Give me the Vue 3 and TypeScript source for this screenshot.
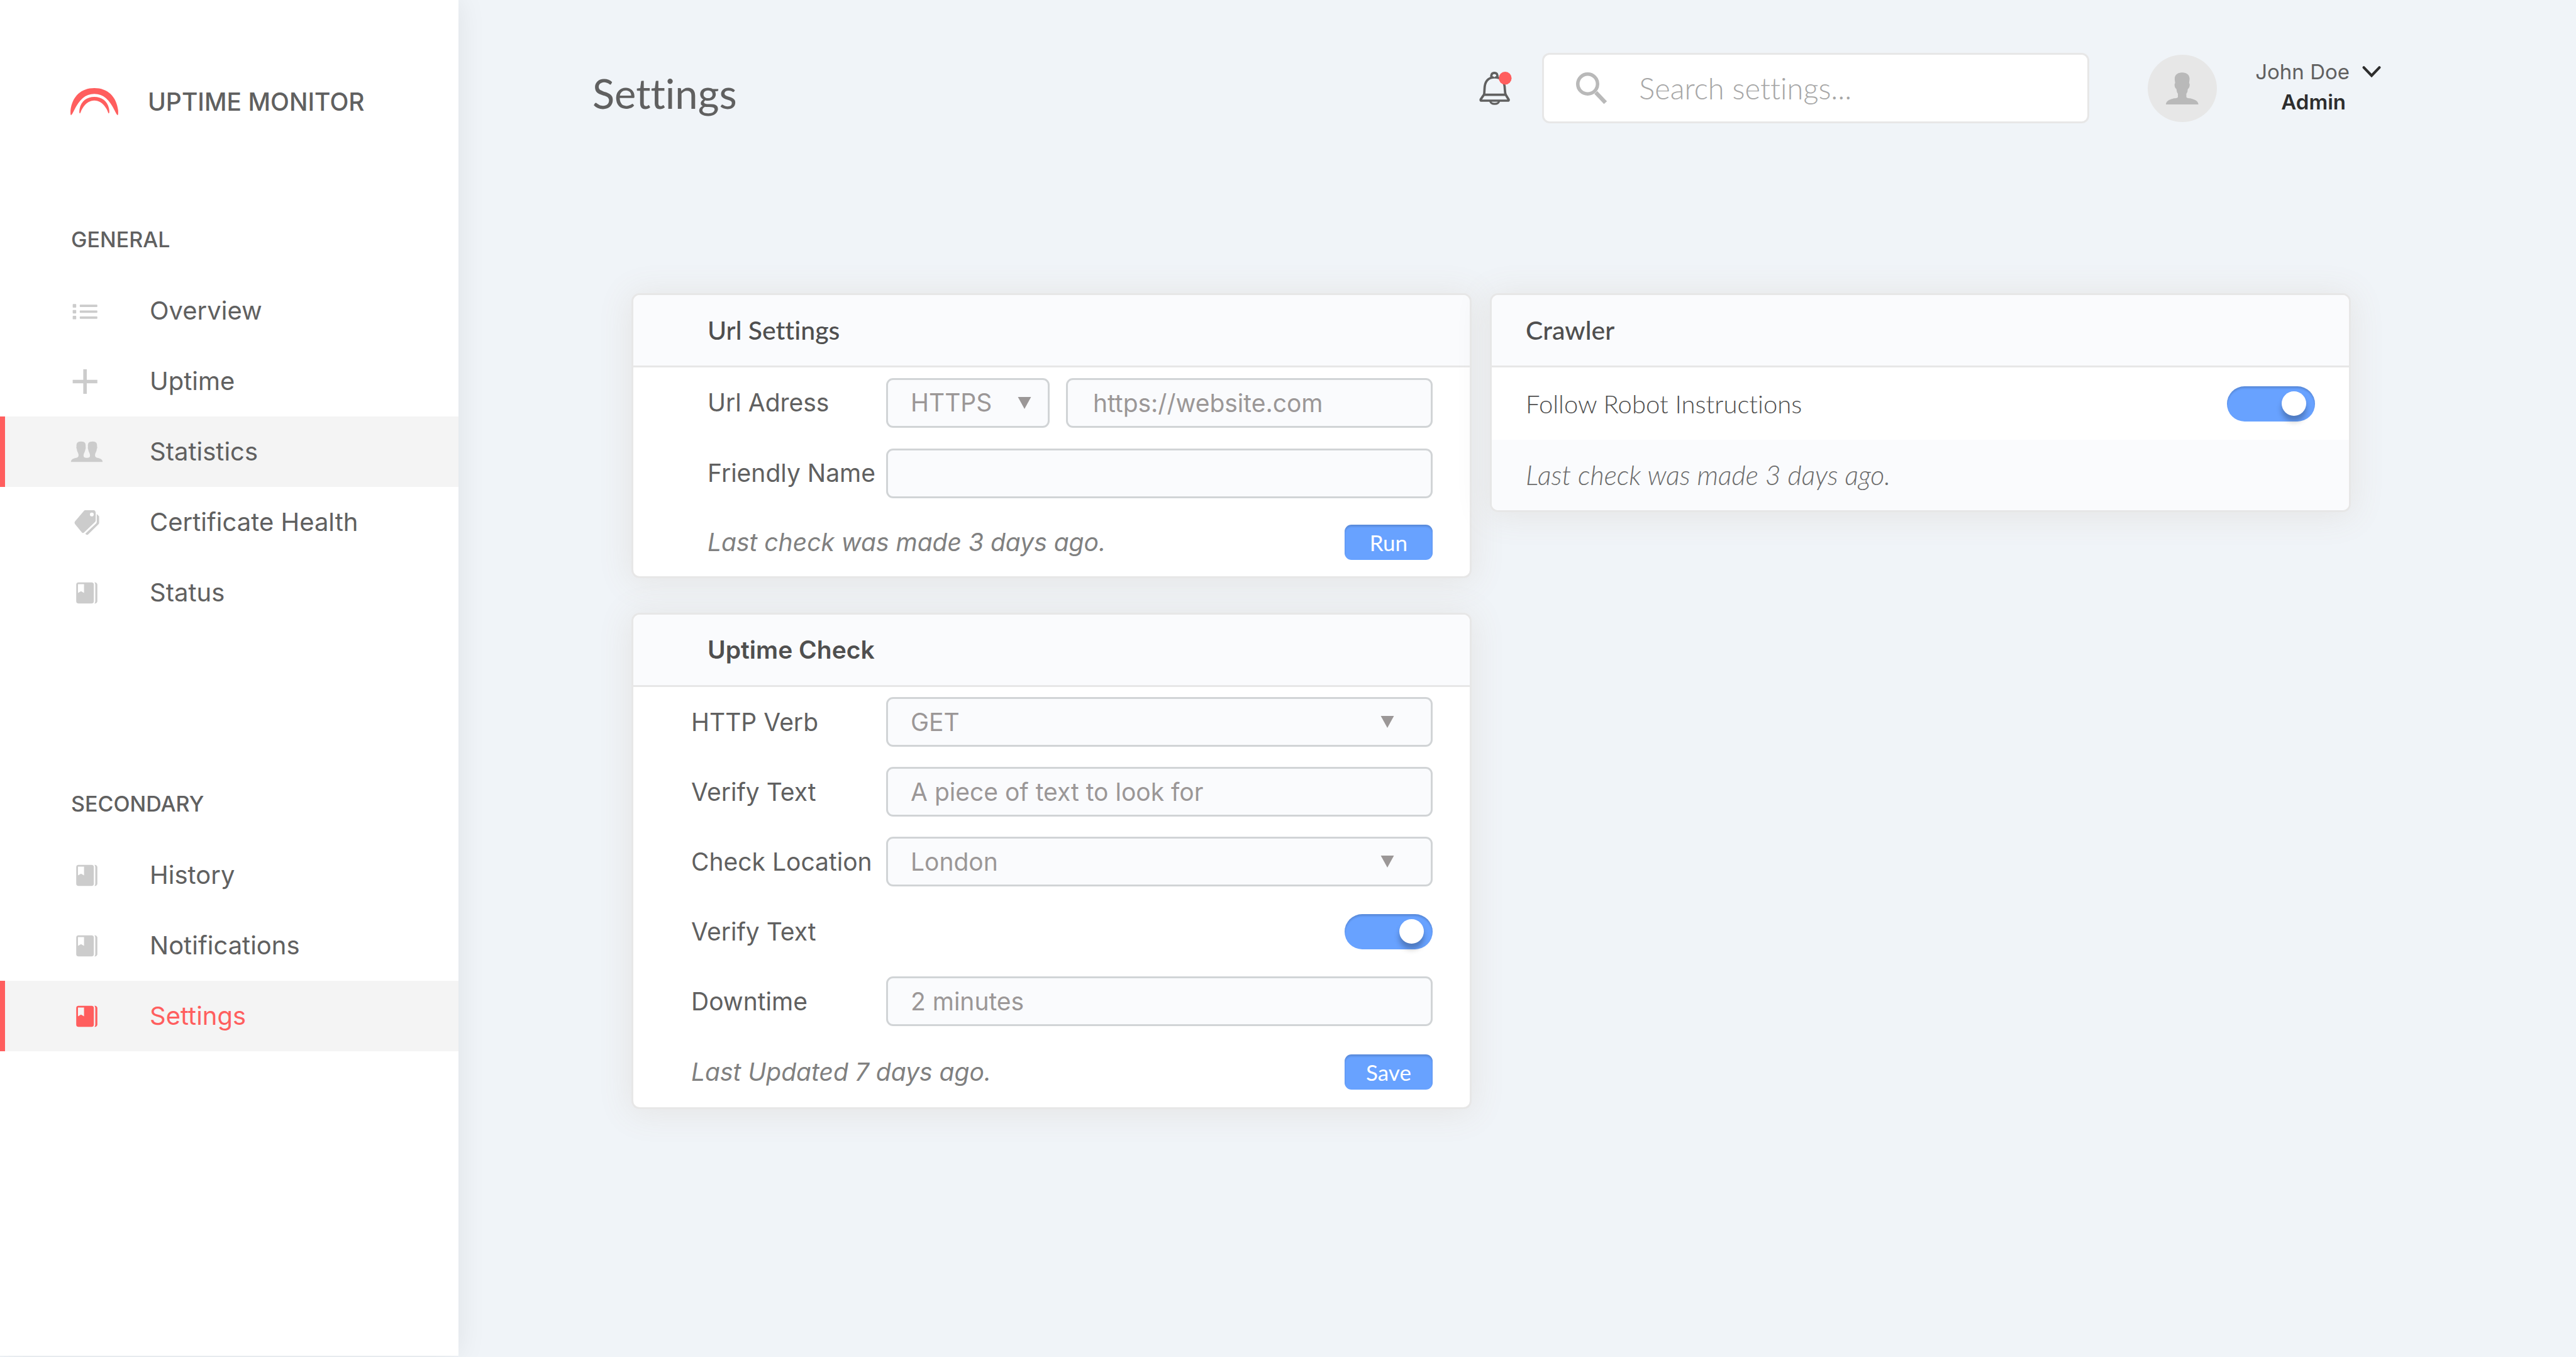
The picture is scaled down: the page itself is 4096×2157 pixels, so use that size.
<script setup lang="ts">
import { ref } from 'vue'

type IconName = 'list' | 'plus' | 'people' | 'tags' | 'book'

interface NavItem {
  label: string
  icon: IconName
  marked?: boolean
  current?: boolean
}

interface NavGroup {
  title: string
  items: NavItem[]
}

const groups: NavGroup[] = [
  {
    title: 'GENERAL',
    items: [
      { label: 'Overview', icon: 'list' },
      { label: 'Uptime', icon: 'plus' },
      { label: 'Statistics', icon: 'people', marked: true },
      { label: 'Certificate Health', icon: 'tags' },
      { label: 'Status', icon: 'book' },
    ],
  },
  {
    title: 'SECONDARY',
    items: [
      { label: 'History', icon: 'book' },
      { label: 'Notifications', icon: 'book' },
      { label: 'Settings', icon: 'book', marked: true, current: true },
    ],
  },
]

const icons: Record<IconName, string> = {
  list: 'M7 12h4a1 1 0 0 1 1 1v4a1 1 0 0 1-1 1h-4a1 1 0 0 1-1-1v-4a1 1 0 0 1 1-1zM7 22h4a1 1 0 0 1 1 1v4a1 1 0 0 1-1 1h-4a1 1 0 0 1-1-1v-4a1 1 0 0 1 1-1zM7 32h4a1 1 0 0 1 1 1v4a1 1 0 0 1-1 1h-4a1 1 0 0 1-1-1v-4a1 1 0 0 1 1-1zM19 13h28q1 0 1 1v2q0 1-1 1h-28q-1 0-1-1v-2q0-1 1-1zM19 23h28q1 0 1 1v2q0 1-1 1h-28q-1 0-1-1v-2q0-1 1-1zM19 33h28q1 0 1 1v2q0 1-1 1h-28q-1 0-1-1v-2q0-1 1-1z',
  plus: 'M24 3h6v18h18v6h-18v18h-6v-18h-18v-6h18z',
  people:
    'M3 41C3 36 8 35 12 34C15 33 16 32 16 29C16 26 13 23 13 19C12 17 12 16 12.5 15C12 9 14 6 20 6C27 6 28.5 9 28 15C28.5 17 28 19 27.500 20C27 24 24.500 26 24.500 30C24.500 33 26 34 30 34C34 34 35.500 33 35.500 30C35.500 26 33 24 32.500 20C32 19 31.500 17 32 15C31.500 9 33 6 40 6C46 6 48 9 47.500 15C48 16 48 17 47 19C47 23 44 26 44 29C44 32 45 33 48 34C52 35 57 36 57 41z',
  tags: 'M27 3H42.500Q45.200 4 45.200 8V20.500Q45.200 22 44 23.300L25.500 41Q23.500 43 21.500 41L9.700 26.500Q8.500 24.500 9.700 22.500L25 4.500Q26 3 27 3zM38.600 7a3.300 3.300 0 1 0 0 6.600a3.300 3.300 0 1 0 0-6.600zM47 9.500L50.500 13Q51 13.500 51 14.500V24.500Q51 26 50 27L32 44.500Q30.500 45.500 29 44.500L27.500 43L46 25.500Q47 24.500 47 23z',
  book: 'M16 6H38Q42 6 42 10V38Q42 42 38 42H16Q12 42 12 38V10Q12 6 16 6zM15 9V24L20.200 21L25.300 24V9zM43 6H44.500Q48 7 48 10V38Q48 41 44.500 42H43Q44.500 41 44.500 38V10Q44.500 7 43 6z',
}

const search = ref('')
const protocol = ref('HTTPS')
const siteUrl = ref('')
const friendlyName = ref('')
const verb = ref('GET')
const verifyText = ref('')
const location = ref('London')
const verifyEnabled = ref(true)
const downtime = ref('')
const followRobots = ref(true)
</script>

<template>
  <div class="page">
    <aside class="sidebar">
      <div class="brand">
        <svg class="brand-mark" viewBox="0 0 81 46" aria-hidden="true">
          <path d="M1 46C-.5 46 0 40 0 38C3 14 18 0 40.500 0S78 14 81 38C81 40 81.500 46 80 46C79 46 77 42 75 38C66 20 56 10 40.500 10S15 20 6 38C4 42 2 46 1 46z" />
          <path d="M16 43C14.500 43 15 38 15.500 35C18 22 28 15 40.500 15S63 22 65.500 35C66 38 66.500 43 65 43C64 43 63 38 61 35C55 25 48 21 40.500 21S26 25 20 35C18 38 17 43 16 43z" />
        </svg>
        <span class="brand-name">UPTIME MONITOR</span>
      </div>
      <nav class="nav">
        <section v-for="group in groups" :key="group.title" class="nav-group">
          <h2 class="nav-title">{{ group.title }}</h2>
          <ul class="nav-list">
            <li v-for="item in group.items" :key="item.label">
              <a href="#" class="nav-link" :class="{ marked: item.marked, current: item.current }">
                <svg class="nav-icon" viewBox="0 0 60 48" aria-hidden="true">
                  <path :d="icons[item.icon]" fill-rule="evenodd" />
                </svg>
                <span>{{ item.label }}</span>
              </a>
            </li>
          </ul>
        </section>
      </nav>
    </aside>

    <main class="main">
      <header class="topbar">
        <h1 class="title">Settings</h1>
        <button class="bell" type="button" aria-label="Notifications">
          <svg viewBox="0 0 56 57" aria-hidden="true">
            <g fill="none" stroke="#606060" stroke-width="4">
              <path d="M21 10C20 5 22 2 26 2S32 5 31 10" />
              <path d="M8.500 39C9 34 9 30 9.500 25C11 14 18 9.500 26.500 9.500S42 14 43.500 25C44 30 44 34 45 39" />
              <path d="M8 39.500H45.500L50.500 47.500Q51 49.500 49 49.500H4Q2 49.500 2.500 47.500z" />
              <path d="M19 50C19 53 22 55 26.500 55S34 53 34 50" stroke-width="3.500" />
            </g>
            <circle cx="26" cy="7" r="2" fill="#f0f4f8" />
            <circle cx="44.500" cy="11" r="11" fill="#ff5e5e" />
          </svg>
        </button>
        <label class="search">
          <svg viewBox="0 0 54 54" aria-hidden="true">
            <g fill="none" stroke="#b9b9b9">
              <circle cx="20" cy="20" r="17" stroke-width="6" />
              <path d="M34 34.500L50.500 52" stroke-width="7" />
            </g>
          </svg>
          <input v-model="search" type="search" placeholder="Search settings..." aria-label="Search settings" />
        </label>
        <div class="account">
          <svg class="avatar" viewBox="0 0 118 114" preserveAspectRatio="none" aria-hidden="true">
            <ellipse cx="59" cy="57" rx="59" ry="57" fill="#e7e7e7" />
            <path
              d="M31 84.300C31 79 37 75.500 42.500 74.500C46 73.500 51.500 74 51.500 71.500V66C50 64 49.500 63 49.300 60C49 58 48.500 57.500 48.200 57.300C46 56 45.500 51 46 49.300C46.300 48.500 46.800 48.500 46.800 48.300C46.600 45 46 43 46 40.500C46 34 51 30 58.700 30S71.400 34 71.400 40.500C71.400 43 70.800 45 70.600 48.300C70.600 48.500 71.100 48.500 71.400 49.300C71.900 51 71.400 56 69.200 57.300C68.900 57.500 68.400 58 68.100 60C67.900 63 67.400 64 65.900 66V71.500C65.900 74 71.400 73.500 74.900 74.500C80.400 75.500 86.500 79 86.500 84.300z"
              fill="#b9b9b9"
            />
          </svg>
          <button class="user" type="button">
            <span class="user-name">John Doe</span>
            <svg class="chevron" viewBox="0 0 31 19" aria-hidden="true">
              <path d="M2.500 2.500L15.500 16L28.500 2.500" fill="none" stroke="#2d2d2d" stroke-width="4.500" stroke-linecap="round" />
            </svg>
            <span class="user-role">Admin</span>
          </button>
        </div>
      </header>

      <div class="columns">
        <div class="stack">
          <form class="card" @submit.prevent>
            <h2 class="card-title rounded">Url Settings</h2>
            <div class="row">
              <label class="row-label" for="site-url">Url Adress</label>
              <div class="fields">
                <div class="select protocol">
                  <select v-model="protocol" aria-label="Protocol">
                    <option>HTTPS</option>
                    <option>HTTP</option>
                  </select>
                  <svg class="arrow" viewBox="0 0 22 20" aria-hidden="true"><path d="M0 0H22L11 20z" /></svg>
                </div>
                <input id="site-url" v-model="siteUrl" class="field" type="text" placeholder="https://website.com" />
              </div>
            </div>
            <div class="row">
              <label class="row-label" for="friendly-name">Friendly Name</label>
              <div class="fields">
                <input id="friendly-name" v-model="friendlyName" class="field" type="text" />
              </div>
            </div>
            <div class="row row-end">
              <p class="note">Last check was made 3 days ago.</p>
              <button class="action" type="submit">Run</button>
            </div>
          </form>

          <form class="card checks" @submit.prevent>
            <h2 class="card-title">Uptime Check</h2>
            <div class="row">
              <label class="row-label" for="verb">HTTP Verb</label>
              <div class="fields">
                <div class="select">
                  <select id="verb" v-model="verb">
                    <option>GET</option>
                    <option>POST</option>
                  </select>
                  <svg class="arrow" viewBox="0 0 22 20" aria-hidden="true"><path d="M0 0H22L11 20z" /></svg>
                </div>
              </div>
            </div>
            <div class="row">
              <label class="row-label" for="verify-text">Verify Text</label>
              <div class="fields">
                <input id="verify-text" v-model="verifyText" class="field" type="text" placeholder="A piece of text to look for" />
              </div>
            </div>
            <div class="row">
              <label class="row-label" for="location">Check Location</label>
              <div class="fields">
                <div class="select">
                  <select id="location" v-model="location">
                    <option>London</option>
                    <option>Paris</option>
                  </select>
                  <svg class="arrow" viewBox="0 0 22 20" aria-hidden="true"><path d="M0 0H22L11 20z" /></svg>
                </div>
              </div>
            </div>
            <div class="row spread">
              <label class="row-label" for="verify-enabled">Verify Text</label>
              <input id="verify-enabled" v-model="verifyEnabled" class="toggle" type="checkbox" role="switch" />
            </div>
            <div class="row">
              <label class="row-label" for="downtime">Downtime</label>
              <div class="fields">
                <input id="downtime" v-model="downtime" class="field" type="text" placeholder="2 minutes" />
              </div>
            </div>
            <div class="row row-end">
              <p class="note">Last Updated 7 days ago.</p>
              <button class="action" type="submit">Save</button>
            </div>
          </form>
        </div>

        <section class="card crawler">
          <h2 class="card-title rounded">Crawler</h2>
          <div class="row spread">
            <label for="follow-robots">Follow Robot Instructions</label>
            <input id="follow-robots" v-model="followRobots" class="toggle" type="checkbox" role="switch" />
          </div>
          <div class="row tinted">
            <p class="note">Last check was made 3 days ago.</p>
          </div>
        </section>
      </div>
    </main>
  </div>
</template>

<style>
body {
  background: #f0f4f8;
}
</style>

<style scoped>
.page,
.page *,
.page *::before {
  box-sizing: border-box;
}

.page {
  display: flex;
  align-items: flex-start;
  min-height: 100vh;
  background: #f0f4f8;
  color: #606060;
  font-family: Inter, "Liberation Sans", sans-serif;
  font-size: 39px;
  font-variant-ligatures: none;
  line-height: 48px;
}

h1,
h2,
p,
ul {
  margin: 0;
  padding: 0;
}

h1,
h2 {
  font-weight: 400;
}

button,
input,
select {
  margin: 0;
  font: inherit;
  color: inherit;
}

button {
  padding: 0;
  border: 0;
  background: none;
  cursor: pointer;
}

svg {
  display: block;
  flex: none;
}

/* Sidebar */
.sidebar {
  flex: 0 0 729px;
  min-height: calc(100vh - 2px);
  padding-top: 140px;
  background: #fff;
  box-shadow: 0 0 44px rgba(0, 0, 0, 0.08);
}

.brand {
  display: flex;
  align-items: center;
  gap: 47px;
  height: 43px;
  padding-left: 112px;
}

.brand-mark {
  width: 76px;
  height: 43px;
  fill: #ff5e5e;
}

.brand-name {
  font-weight: 500;
}

.nav {
  display: flex;
  flex-direction: column;
  gap: 256px;
  padding-top: 174px;
}

.nav-title {
  margin-bottom: 33px;
  padding-left: 113px;
  font-size: 34px;
  font-weight: 500;
}

.nav-list {
  list-style: none;
}

.nav-link {
  display: flex;
  align-items: center;
  gap: 72px;
  height: 112px;
  padding-left: 102px;
  border-left: 8px solid transparent;
  color: inherit;
  font-size: 40px;
  text-decoration: none;
}

.nav-link.marked {
  border-left-color: #ff5e5e;
  background: #f4f4f4;
}

.nav-icon {
  width: 56px;
  height: 45px;
  fill: #ccc;
}

.nav-link.current {
  color: #ff5e5e;
}

.nav-link.current .nav-icon {
  fill: #ff5e5e;
}

/* Top bar */
.main {
  flex: 1;
  min-width: 0;
}

.topbar {
  display: flex;
  align-items: center;
  height: 280px;
  padding: 0 310px 0 213px;
}

.title {
  flex: 1;
  padding-top: 16px;
  font-family: Lato, "Open Sans", sans-serif;
  font-size: 65px;
  line-height: 80px;
}

.bell {
  margin-right: 48px;
}

.bell svg {
  width: 52px;
  height: 53px;
}

.search {
  display: flex;
  flex: 0 1 870px;
  align-items: center;
  gap: 50px;
  height: 112px;
  padding: 0 51px;
  border: 3px solid #e7e7e7;
  border-radius: 12px;
  background: #fff;
}

.search svg {
  width: 50px;
  height: 50px;
}

.search input {
  flex: 1;
  min-width: 0;
  height: 72px;
  padding: 0;
  border: 0;
  outline: 0;
  background: none;
  appearance: none;
  font-family: Lato, "Open Sans", sans-serif;
  font-size: 47px;
  font-weight: 300;
  line-height: 64px;
}

.search input::placeholder {
  color: #a6a6a6;
  opacity: 1;
}

.account {
  display: flex;
  align-items: center;
  gap: 61px;
  margin-left: 93px;
}

.avatar {
  width: 110px;
  height: 107px;
}

.user {
  display: grid;
  grid-template-columns: auto auto;
  align-items: center;
  column-gap: 20px;
  padding-bottom: 4px;
  font-size: 33px;
}

.chevron {
  width: 30px;
  height: 18px;
}

.user-role {
  padding-right: 6px;
  color: #2d2d2d;
  font-weight: 600;
  text-align: right;
}

/* Cards */
.columns {
  display: grid;
  grid-template-columns: 1336fr 1369fr;
  align-items: start;
  gap: 29px;
  padding: 186px 358px 0 275px;
}

.stack {
  display: flex;
  flex-direction: column;
  gap: 55px;
}

.card {
  --indent: 118px;
  overflow: hidden;
  border: 3px solid #e7e7e7;
  border-radius: 13px;
  background: #fff;
  box-shadow: 0 4px 52px 4px #e5e5e5;
}

.card-title {
  height: 115px;
  padding-left: 118px;
  border-bottom: 3px solid #e7e7e7;
  background: #fafbfd;
  color: #4f4f4f;
  font-weight: 600;
  font-size: 39px;
  line-height: 112px;
}

.card-title.rounded {
  font-family: Lato, "Open Sans", sans-serif;
  font-size: 41px;
  font-weight: 500;
}

.row {
  display: flex;
  align-items: center;
  height: 112px;
  padding: 0 59px 0 var(--indent);
}

.spread,
.row-end {
  justify-content: space-between;
}

.row-end {
  height: 108px;
}

.row-label {
  flex: 0 0 calc(402px - var(--indent));
}

.checks {
  --indent: 92px;
}

.checks .row {
  height: 111px;
}

.checks .row-end {
  height: 113px;
}

.fields {
  display: flex;
  flex: 1;
  gap: 26px;
  min-width: 0;
}

.field,
.select select {
  width: 100%;
  min-width: 0;
  height: 79px;
  padding: 0 36px;
  border: 3px solid #d1d4d6;
  border-radius: 11px;
  outline: 0;
  background: #fafbfd;
  color: #9b9797;
  appearance: none;
}

.field::placeholder {
  color: #9b9797;
  opacity: 1;
}

.field {
  flex: 1;
}

.select + .field {
  padding-left: 40px;
}

.select {
  display: grid;
  flex: 1;
  align-items: center;
}

.select > * {
  grid-area: 1 / 1;
}

.arrow {
  justify-self: end;
  width: 22px;
  height: 19px;
  margin-right: 61px;
  fill: #9b9797;
  pointer-events: none;
}

.protocol {
  flex: 0 0 260px;
}

.protocol .arrow {
  margin-right: 29px;
}

.note {
  color: #808080;
  font-style: italic;
}

.action {
  width: 140px;
  height: 56px;
  border-radius: 11px;
  background: #68a2ff;
  box-shadow: inset 0 3px 3px rgba(0, 0, 0, 0.15);
  color: #fff;
  font-family: Lato, "Open Sans", sans-serif;
  font-size: 35px;
}

.toggle {
  width: 140px;
  height: 56px;
  padding: 8px 14px;
  border-radius: 28px;
  background: #c4c8cc;
  box-shadow: inset 0 3px 3px rgba(0, 0, 0, 0.15);
  appearance: none;
}

.toggle::before {
  content: "";
  display: block;
  width: 39px;
  height: 39px;
  border-radius: 50%;
  background: #fff;
  box-shadow: 0 9px 9px rgba(0, 0, 0, 0.25);
}

.toggle:checked {
  background: #68a2ff;
}

.toggle:checked::before {
  margin-left: auto;
}

/* Crawler card */
.crawler {
  --indent: 54px;
  color: #4f4f4f;
  font-family: Lato, "Open Sans", sans-serif;
  font-size: 40px;
  font-weight: 300;
}

.crawler .card-title {
  padding-left: 54px;
}

.crawler .row {
  height: 115px;
  padding-right: 54px;
}

.crawler .tinted {
  height: 112px;
  background: #fafbfd;
}

.crawler .note {
  color: #6c6c6c;
  font-size: 43px;
}
</style>
